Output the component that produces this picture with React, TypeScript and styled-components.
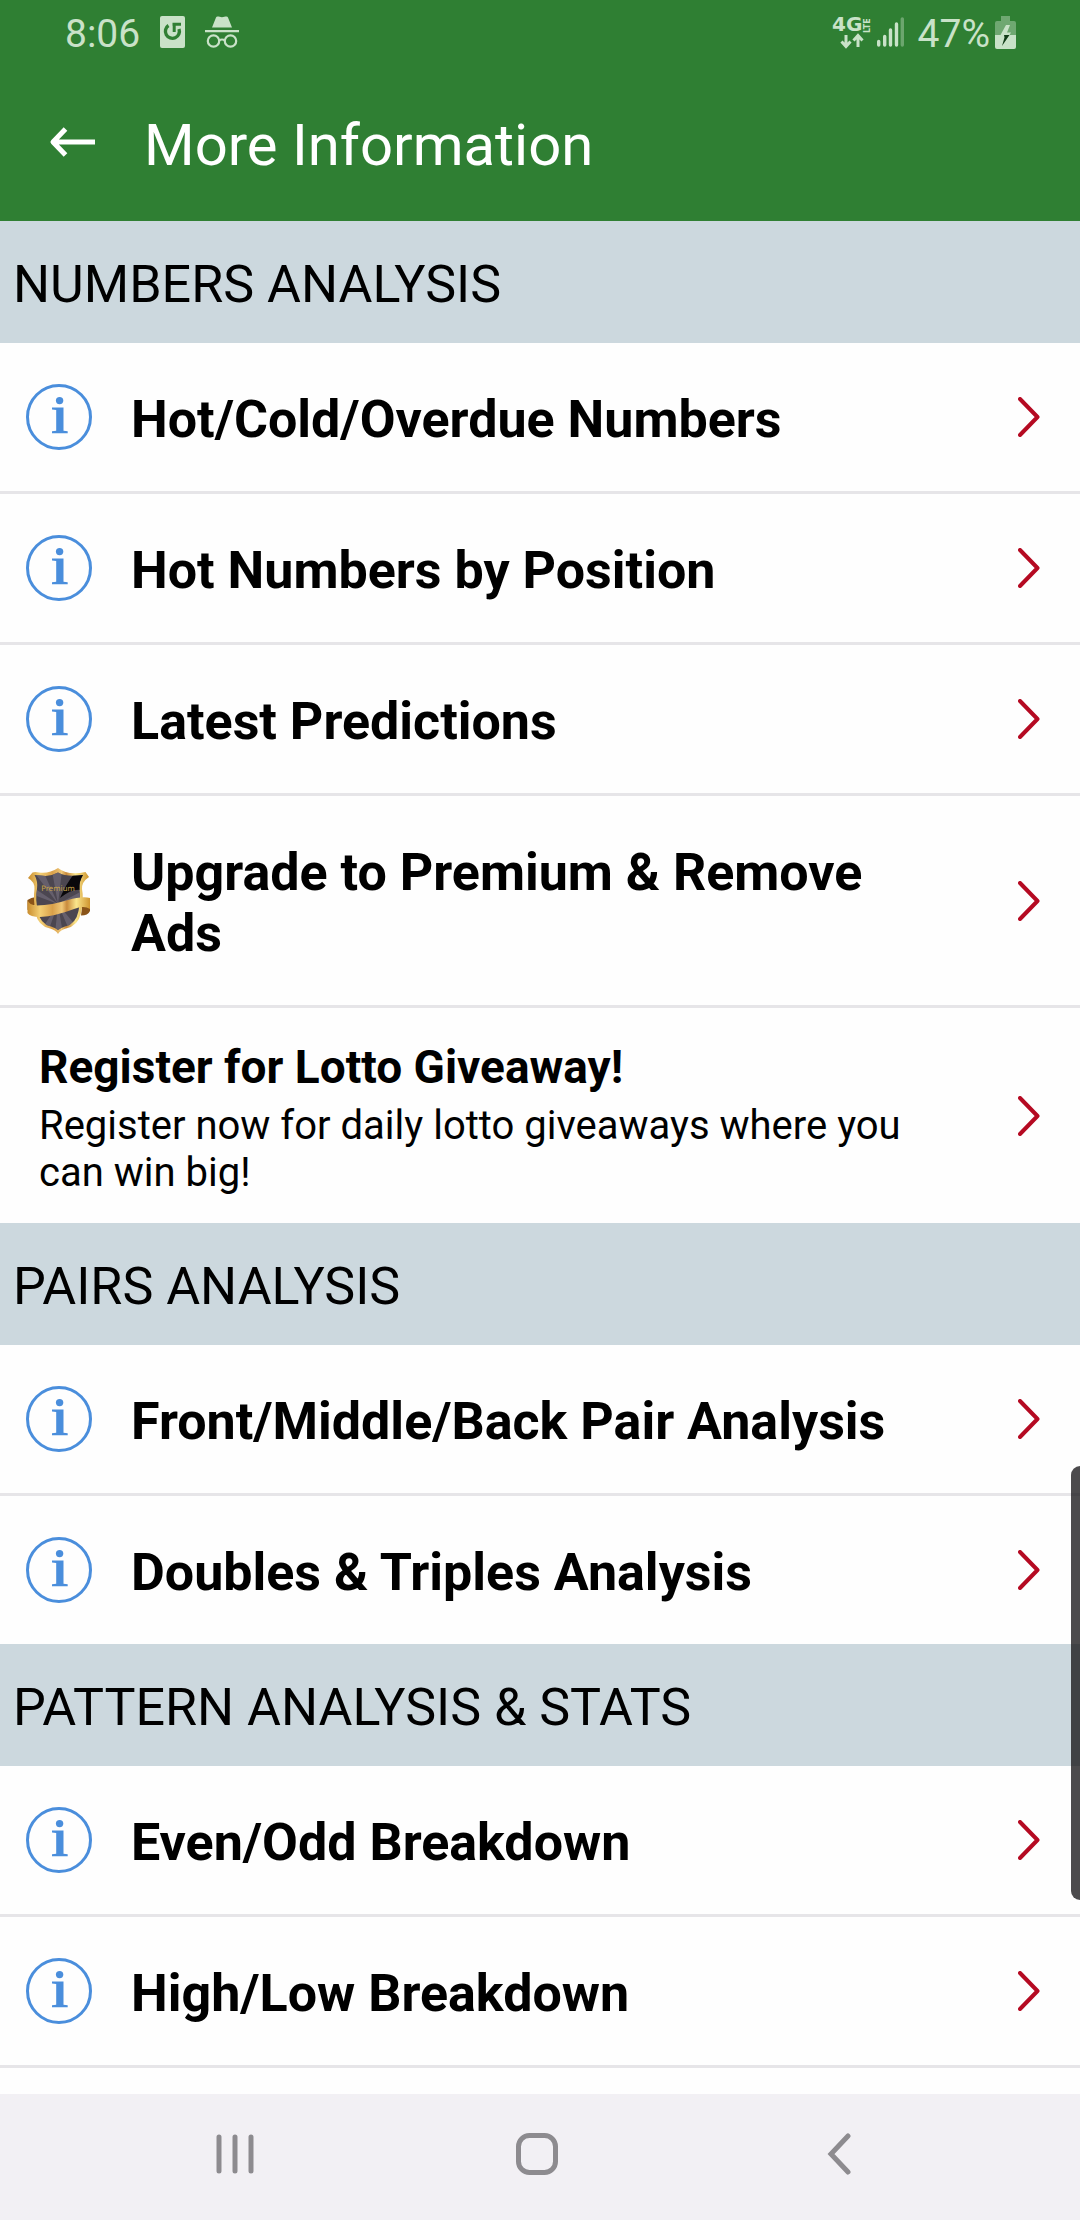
import React from "react";
import styled, { createGlobalStyle } from "styled-components";

const GlobalStyle = createGlobalStyle`
  * { box-sizing: border-box; }
  body { margin: 0; background: #fefefe; font-family: Roboto, "Noto Sans", sans-serif; color: #000; }
  h1, h2, p, ul { margin: 0; padding: 0; font-weight: 400; }
  ul { list-style: none; }
  svg { display: block; flex: none; }
`;

const Screen = styled.div`
  min-height: 100vh;
  display: flex;
  flex-direction: column;
  position: relative;
`;

const Header = styled.header`
  background: #2f7f33;
  color: #fff;
`;

const StatusBar = styled.div`
  height: 64px;
  padding: 0 64px 0 65px;
  display: flex;
  justify-content: space-between;
  align-items: center;
  color: #c9e2c8;
  font-size: 39px;
  line-height: 46px;
`;

const StatusGroup = styled.div<{ $gap: number }>`
  display: flex;
  align-items: center;
  gap: ${(p) => p.$gap}px;
`;

const StatusText = styled.span<{ $inset?: number }>`
  padding: 3px 0 0 ${(p) => p.$inset ?? 0}px;
`;

const AppBar = styled.div`
  height: 157px;
  padding: 0 48px;
  display: flex;
  align-items: center;
  gap: 46px;
`;

const IconButton = styled.button`
  display: flex;
  align-items: center;
  justify-content: center;
  padding: 0;
  border: 0;
  background: none;
  color: inherit;
  cursor: pointer;
`;

const Title = styled.h1`
  font-size: 58px;
  line-height: 68px;
  padding-top: 4px;
`;

const List = styled.main`
  flex: 1;
`;

const SectionTitle = styled.h2`
  background: #ccd8de;
  padding: 33px 13px 28px;
  font-size: 52px;
  line-height: 61px;
`;

const Item = styled.li`
  border-bottom: 3px solid #e6e5e8;
  &:last-child { border-bottom: 0; }
`;

const ItemList = styled.ul<{ $open?: boolean }>`
  ${(p) => p.$open && `${Item}:last-child { border-bottom: 3px solid #e6e5e8; }`}
`;

const RowLink = styled.a<{ $plain?: boolean }>`
  display: flex;
  align-items: center;
  color: inherit;
  text-decoration: none;
  padding: 0 40px 0 ${(p) => (p.$plain ? 39 : 26)}px;
`;

const Label = styled.span`
  flex: 1;
  padding: 46px 64px 41px 39px;
  font-size: 52px;
  line-height: 61px;
  font-weight: 700;
`;

const Promo = styled.div`
  flex: 1;
  padding: 33px 64px 27px 0;
  display: grid;
  gap: 8px;
`;

const PromoTitle = styled.p`
  font-size: 46px;
  line-height: 53px;
  font-weight: 700;
`;

const PromoText = styled.p`
  font-size: 40px;
  line-height: 47px;
`;

const NavBar = styled.nav`
  height: 126px;
  padding: 0 90px 6px 84px;
  display: grid;
  grid-template-columns: repeat(3, 1fr);
  background: #f2f0f4;
  color: #8d8b8f;
`;

const ScrollHandle = styled.div`
  position: absolute;
  right: 0;
  top: 1466px;
  width: 9px;
  height: 434px;
  border-radius: 9px 0 0 9px;
  background: rgba(20, 18, 21, 0.76);
`;

const NetworkSvg = styled.svg`
  overflow: visible;
  font-family: "DejaVu Sans", sans-serif;
  font-weight: 700;
`;

const InfoIcon = () => (
  <svg width="66" height="66" viewBox="0 0 66 66" fill="#4a8edc" aria-hidden="true">
    <circle cx="33" cy="33" r="31.5" fill="none" stroke="#4a8edc" strokeWidth="3" />
    <circle cx="33.6" cy="16.6" r="3.7" />
    <path d="M26 23.500h11.500v23.200l4.200.6v1.900H26v-1.900l4.200-.6V26l-4.200-.6z" />
  </svg>
);

const ShieldIcon = () => (
  <svg width="66" height="66" viewBox="0 0 66 66" aria-hidden="true">
    <defs>
      <linearGradient id="gold" x1="0" x2="1">
        <stop offset="0" stopColor="#c98d2e" />
        <stop offset=".2" stopColor="#f3cf74" />
        <stop offset=".4" stopColor="#d9a04a" />
        <stop offset=".55" stopColor="#f0c878" />
        <stop offset=".63" stopColor="#c98a3c" />
        <stop offset=".78" stopColor="#fbe68c" />
        <stop offset="1" stopColor="#cf952f" />
      </linearGradient>
      <clipPath id="face">
        <path d="M32 4.500Q24 9 15 7.500L8.500 7Q12 13 11 21Q9 31 12 43Q14 56 25 58.500Q30 60 32 62Q34 60 39 58.500Q50 56 52.500 43Q55 31 53.500 21Q53 13 57 7Q41 9.500 32 4.500Z" />
      </clipPath>
    </defs>
    <path d="M1.500 32Q5 29.500 10 29V36L1.500 42Z M56 39L64 36.500V43Q62 47.500 55 47.500Z" fill="#8a5418" />
    <path d="M32 0Q23 6 13 4.500Q9 3.500 6.500 4.500L2 10Q9 14 8.500 21Q7 31 9.500 45Q12 58 24 60.500Q30 62 32 66Q34 62 40 60.500Q52 58 55 45Q58 31 56 21Q55.500 14 63 9L59.500 4Q42 8 32 0Z" fill="url(#gold)" />
    <g clipPath="url(#face)">
      <rect width="66" height="66" fill="#4b4650" />
      <path d="M32 36L8 4L18 5ZM32 36L26 3L36 3ZM32 36L5 18V26ZM32 36L58 22V30ZM32 36L14 64H22ZM32 36L29 66H37ZM32 36L44 64L50 58Z" fill="#706a78" opacity=".7" />
      <path d="M48 6H60L56 22Q46 20 34 30Q40 16 48 6Z" fill="#09080b" />
    </g>
    <text x="32" y="22.500" textAnchor="middle" fontFamily="DejaVu Sans, sans-serif" fontSize="7.500" fill="#c9a449">Premium</text>
    <path d="M1.500 32Q3 37 11 37.500Q26 37 42 32Q56 28 64 30V41Q58 37 48 41Q30 48 14 49Q4 49 1.500 45Z" fill="url(#gold)" />
  </svg>
);

const Chevron = () => (
  <svg width="22" height="40" viewBox="0 0 22 40" fill="none" stroke="#b50a22" strokeWidth="4" strokeLinecap="round" strokeLinejoin="round" aria-hidden="true">
    <path d="M2 2L19.500 20L2 38" />
  </svg>
);

const BatterySaverIcon = () => (
  <svg width="25" height="32" viewBox="0 0 25 32" aria-hidden="true">
    <rect width="25" height="32" rx="2" fill="currentColor" />
    <path d="M8.500 9.500A7 7 0 1 0 19 13" fill="none" stroke="#2f7f33" strokeWidth="3.400" />
    <path d="M12.500 8.200H21M14.200 7V16" fill="none" stroke="#2f7f33" strokeWidth="3" />
  </svg>
);

const IncognitoIcon = () => (
  <svg width="34" height="32" viewBox="0 0 34 32" aria-hidden="true">
    <path d="M11 1.500Q11.500 0 13.500.500L17 1.300L20.500.500Q22.500 0 23 1.500L27 11.500H7Z" fill="currentColor" />
    <path d="M0 14H34V16.300H0Z" fill="currentColor" />
    <g fill="none" stroke="currentColor" strokeWidth="2.200">
      <circle cx="8.500" cy="25" r="5.700" />
      <circle cx="25.500" cy="25" r="5.700" />
      <path d="M14 24.500Q17 22.500 20 24.500" />
    </g>
  </svg>
);

const NetworkIcon = () => (
  <NetworkSvg width="40" height="33" viewBox="0 0 40 33" fill="currentColor" role="img" aria-label="4G LTE">
    <text x="0" y="15" fontSize="20">4G</text>
    <text transform="translate(38 17) rotate(-90)" fontSize="8">LTE</text>
    <path d="M14 19V30M9.500 25.500L14 30.500L18.500 25.500M26 31V20M21.500 24.500L26 19.500L30.500 24.500" fill="none" stroke="currentColor" strokeWidth="3" />
  </NetworkSvg>
);

const SignalIcon = () => (
  <svg width="27" height="30" viewBox="0 0 27 30" stroke="currentColor" strokeWidth="3.400" strokeLinecap="round" aria-hidden="true">
    <path d="M1.700 24.500V28M7.700 19.500V28M13.500 13V28M19.500 7V28" />
    <path d="M25.300 2V28" opacity=".4" />
  </svg>
);

const BatteryIcon = () => (
  <svg width="21" height="33" viewBox="0 0 21 33" aria-hidden="true">
    <path d="M6 0H15V5H19Q21 5 21 7V19H0V7Q0 5 2 5H6Z" fill="currentColor" opacity=".42" />
    <path d="M0 19H21V31Q21 33 19 33H2Q0 33 0 31Z" fill="currentColor" />
    <path d="M11 9H15L12 16.500H16L14.500 19H5.500Z" fill="currentColor" />
    <path d="M9 19H14.500L7 30L9.500 21.500Z" fill="#123d18" />
  </svg>
);

const BackArrow = () => (
  <svg width="50" height="34" viewBox="0 0 50 34" fill="none" stroke="#fff" strokeWidth="5" strokeLinejoin="round" aria-hidden="true">
    <path d="M47 16H5.500M17.500 3L5 16L17.500 29" />
  </svg>
);

const RecentsIcon = () => (
  <svg width="38" height="40" viewBox="0 0 38 40" stroke="currentColor" strokeWidth="5" strokeLinecap="round" aria-hidden="true">
    <path d="M3 3V37M19 3V37M35 3V37" />
  </svg>
);

const HomeIcon = () => (
  <svg width="42" height="42" viewBox="0 0 42 42" fill="none" stroke="currentColor" strokeWidth="5" aria-hidden="true">
    <rect x="2.500" y="2.500" width="37" height="37" rx="11" />
  </svg>
);

const NavBackIcon = () => (
  <svg width="24" height="42" viewBox="0 0 24 42" fill="none" stroke="currentColor" strokeWidth="5" strokeLinecap="round" aria-hidden="true">
    <path d="M21 3L4 21L21 39" />
  </svg>
);

type Entry = { label: string; kind?: "premium" | "promo"; text?: string };
type Group = { title: string; open?: boolean; entries: Entry[] };

const groups: Group[] = [
  {
    title: "NUMBERS ANALYSIS",
    entries: [
      { label: "Hot/Cold/Overdue Numbers" },
      { label: "Hot Numbers by Position" },
      { label: "Latest Predictions" },
      { label: "Upgrade to Premium & Remove Ads", kind: "premium" },
      {
        label: "Register for Lotto Giveaway!",
        kind: "promo",
        text: "Register now for daily lotto giveaways where you can win big!",
      },
    ],
  },
  {
    title: "PAIRS ANALYSIS",
    entries: [{ label: "Front/Middle/Back Pair Analysis" }, { label: "Doubles & Triples Analysis" }],
  },
  {
    title: "PATTERN ANALYSIS & STATS",
    open: true,
    entries: [{ label: "Even/Odd Breakdown" }, { label: "High/Low Breakdown" }],
  },
];

function Row({ label, kind, text }: Entry) {
  return (
    <Item>
      <RowLink href="#" $plain={kind === "promo"}>
        {kind === "promo" ? (
          <Promo>
            <PromoTitle>{label}</PromoTitle>
            <PromoText>{text}</PromoText>
          </Promo>
        ) : (
          <>
            {kind === "premium" ? <ShieldIcon /> : <InfoIcon />}
            <Label>{label}</Label>
          </>
        )}
        <Chevron />
      </RowLink>
    </Item>
  );
}

export default function App() {
  return (
    <Screen>
      <GlobalStyle />
      <Header>
        <StatusBar>
          <StatusGroup $gap={20}>
            <StatusText>8:06</StatusText>
            <BatterySaverIcon />
            <IncognitoIcon />
          </StatusGroup>
          <StatusGroup $gap={5}>
            <NetworkIcon />
            <SignalIcon />
            <StatusText $inset={9}>47%</StatusText>
            <BatteryIcon />
          </StatusGroup>
        </StatusBar>
        <AppBar>
          <IconButton aria-label="Back">
            <BackArrow />
          </IconButton>
          <Title>More Information</Title>
        </AppBar>
      </Header>
      <List>
        {groups.map((group) => (
          <section key={group.title}>
            <SectionTitle>{group.title}</SectionTitle>
            <ItemList $open={group.open}>
              {group.entries.map((entry) => (
                <Row key={entry.label} {...entry} />
              ))}
            </ItemList>
          </section>
        ))}
      </List>
      <NavBar>
        <IconButton aria-label="Recent apps">
          <RecentsIcon />
        </IconButton>
        <IconButton aria-label="Home">
          <HomeIcon />
        </IconButton>
        <IconButton aria-label="Go back">
          <NavBackIcon />
        </IconButton>
      </NavBar>
      <ScrollHandle />
    </Screen>
  );
}
